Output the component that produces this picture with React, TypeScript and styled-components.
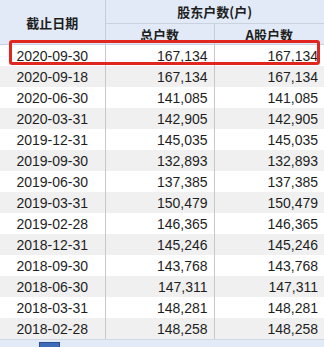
import styled, { createGlobalStyle } from 'styled-components';

const Global = createGlobalStyle`
    html, body {
        margin: 0;
        padding: 0;
        background: #ffffff;
    }
`;

const Frame = styled.div`
    position: relative;
    width: 324px;
    height: 347px;
    overflow: hidden;
    background: #ffffff;
    display: flex;
    flex-direction: column;
`;

const Table = styled.table`
    table-layout: fixed;
    width: 324px;
    border-collapse: collapse;
    font-family: 'Liberation Sans', Arial, 'Noto Sans CJK SC', sans-serif;
`;

const HeadCell = styled.th<{ $h: number }>`
    height: ${(p) => p.$h}px;
    padding: 0;
    background: #e1eaf6;
    color: #1e1e1e;
    font-family: 'Noto Sans CJK SC', sans-serif;
    font-weight: 700;
    font-size: 13px;
    text-align: center;
    border-right: 1px solid #c3ccd8;
    border-bottom: 1px solid #c9d3e0;
    &:last-child {
        border-right: none;
    }
`;

const Row = styled.tr<{ $alt: boolean }>`
    background: ${(p) => (p.$alt ? '#f0f0f0' : '#ffffff')};
`;

const Cell = styled.td<{ $align: 'center' | 'right' }>`
    height: 21px;
    padding: 0 6px 0 0;
    font-size: 14px;
    color: #1e1e1e;
    text-align: ${(p) => p.$align};
    border-right: 1px solid #c8c8c8;
    white-space: nowrap;
    &:first-child {
        padding: 0;
    }
    &:last-child {
        border-right: none;
    }
`;

const Highlight = styled.div`
    position: absolute;
    left: 9px;
    top: 40px;
    width: 311px;
    height: 25px;
    border: 3px solid #e0261f;
    border-radius: 3px;
    box-sizing: border-box;
`;

const Footer = styled.div`
    flex: 1;
    background: #e1eaf6;
    border-top: 1px solid #d0d9e6;
    display: flex;
    align-items: flex-end;
    padding-left: 39px;
`;

const Thumb = styled.div`
    width: 19px;
    height: 4px;
    background: #3f6cb8;
    border: 1px solid #2a4f8f;
    border-bottom: none;
`;

const rows: [string, string, string][] = [
    ['2020-09-30', '167,134', '167,134'],
    ['2020-09-18', '167,134', '167,134'],
    ['2020-06-30', '141,085', '141,085'],
    ['2020-03-31', '142,905', '142,905'],
    ['2019-12-31', '145,035', '145,035'],
    ['2019-09-30', '132,893', '132,893'],
    ['2019-06-30', '137,385', '137,385'],
    ['2019-03-31', '150,479', '150,479'],
    ['2019-02-28', '146,365', '146,365'],
    ['2018-12-31', '145,246', '145,246'],
    ['2018-09-30', '143,768', '143,768'],
    ['2018-06-30', '147,311', '147,311'],
    ['2018-03-31', '148,281', '148,281'],
    ['2018-02-28', '148,258', '148,258'],
];

export default function App() {
    return (
        <Frame>
            <Global />
            <Table>
                <colgroup>
                    <col style={{ width: 105 }} />
                    <col style={{ width: 109 }} />
                    <col style={{ width: 110 }} />
                </colgroup>
                <thead>
                    <tr>
                        <HeadCell $h={23} rowSpan={2}>截止日期</HeadCell>
                        <HeadCell $h={23} colSpan={2}>股东户数(户)</HeadCell>
                    </tr>
                    <tr>
                        <HeadCell $h={20}>总户数</HeadCell>
                        <HeadCell $h={20}>A股户数</HeadCell>
                    </tr>
                </thead>
                <tbody>
                    {rows.map(([d, a, b], i) => (
                        <Row key={d} $alt={i % 2 === 1}>
                            <Cell $align="center">{d}</Cell>
                            <Cell $align="right">{a}</Cell>
                            <Cell $align="right">{b}</Cell>
                        </Row>
                    ))}
                </tbody>
            </Table>
            <Footer>
                <Thumb />
            </Footer>
            <Highlight />
        </Frame>
    );
}
